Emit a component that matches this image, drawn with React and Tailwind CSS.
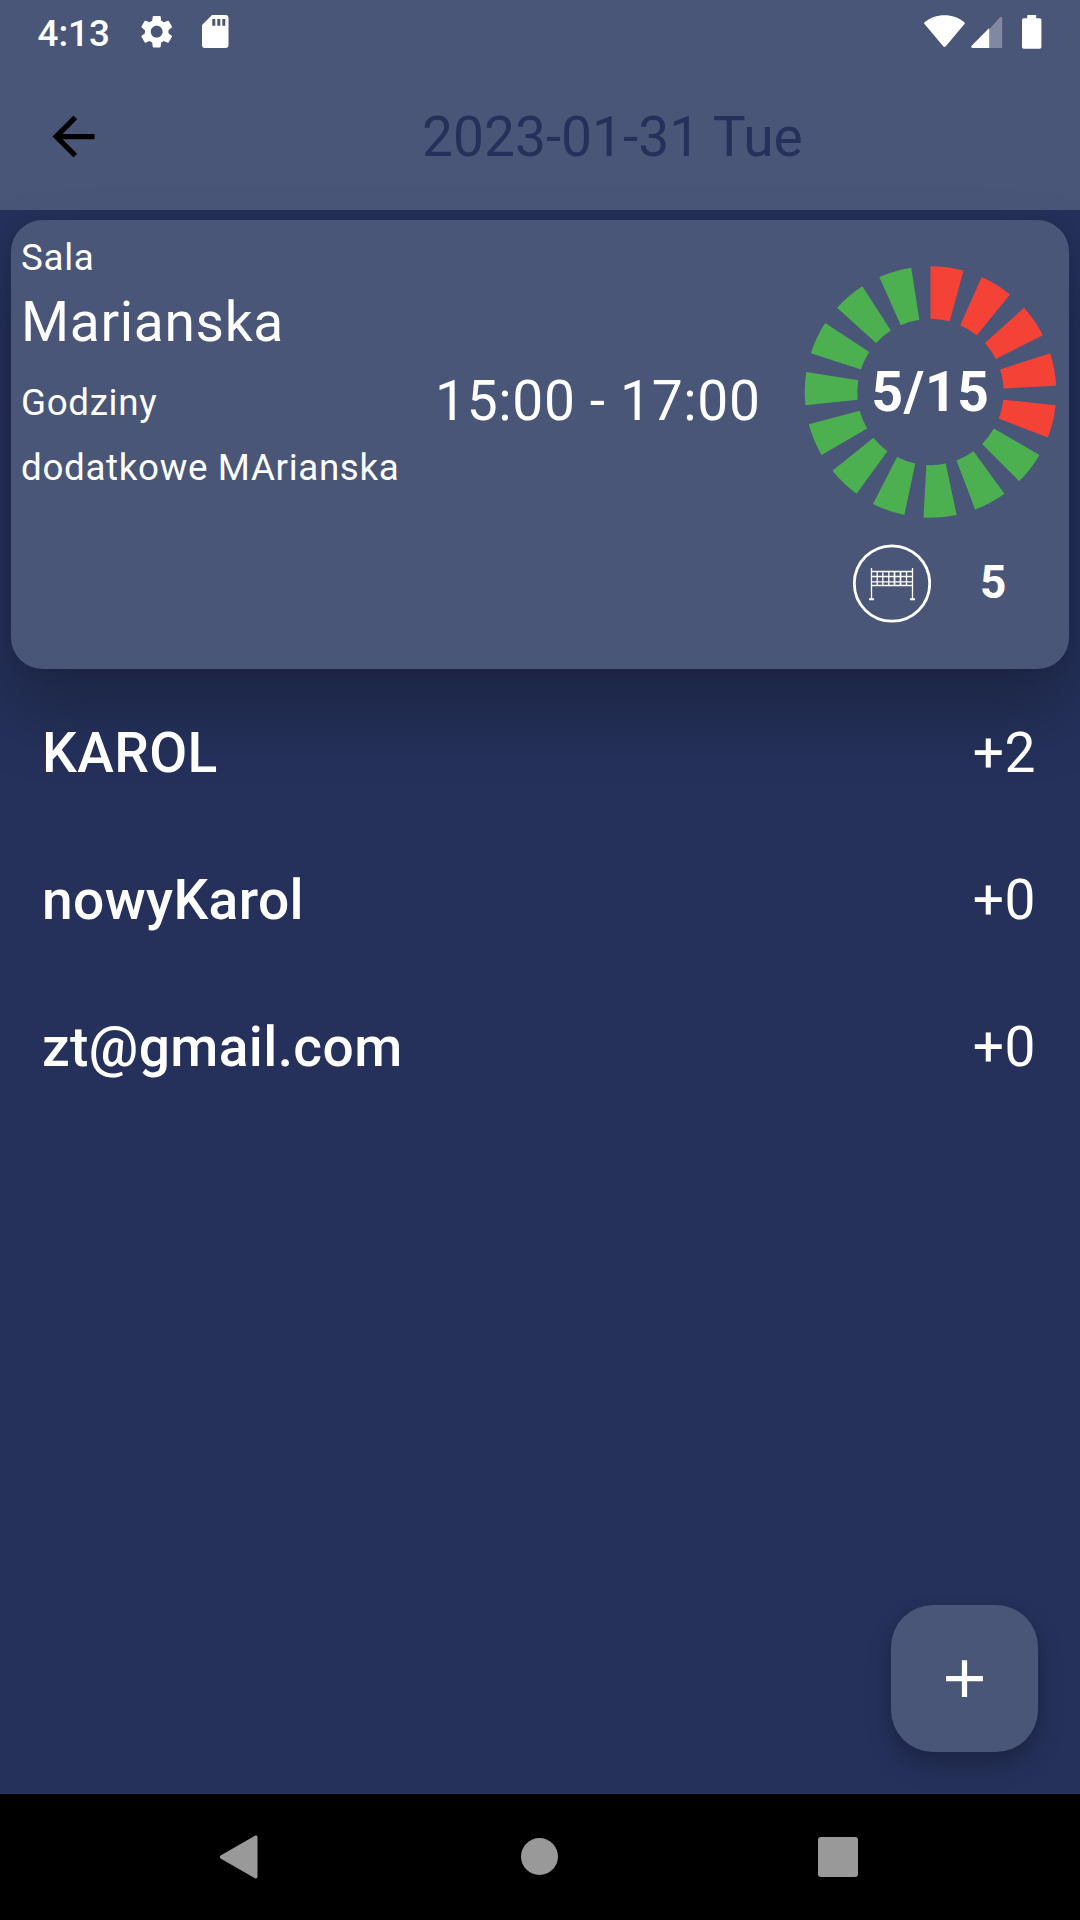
import { MdSettings, MdArrowBack, MdAdd } from 'react-icons/md'

const players = [
  { name: 'KAROL', extra: 2 },
  { name: 'nowyKarol', extra: 0 },
  { name: 'zt@gmail.com', extra: 0 },
]

const STEP = 24
const SWEEP = 15.2

function point(r, deg) {
  const a = (deg * Math.PI) / 180
  return `${(r * Math.sin(a)).toFixed(2)} ${(-r * Math.cos(a)).toFixed(2)}`
}

function segmentPath(start, outer = 125.8, inner = 73.2) {
  const end = start + SWEEP
  return `M${point(outer, start)}A${outer} ${outer} 0 0 1 ${point(outer, end)}L${point(inner, end)}A${inner} ${inner} 0 0 0 ${point(inner, start)}Z`
}

function StatusBar() {
  return (
    <div className="flex h-[63px] items-center justify-between pl-[37.5px] pr-[38px] text-white">
      <div className="flex items-center">
        <span className="w-[73px] pt-[3px] text-[36.75px] leading-[63px] font-medium">4:13</span>
        <MdSettings className="ml-[26.4px] size-[39.4px]" />
        <svg className="ml-[25.6px]" width="27" height="33" viewBox="0 0 27 33" fill="currentColor">
          <path fillRule="evenodd" d="M10 0H23.500a3 3 0 0 1 3 3V30a3 3 0 0 1-3 3H3a3 3 0 0 1-3-3V10ZM10.300 4V10.700H13.300V4ZM15.300 4V10.700H18.300V4ZM20.300 4V10.700H23.300V4Z" />
        </svg>
      </div>
      <div className="flex items-center">
        <svg width="41" height="34" viewBox="0 0 41 34" fill="currentColor">
          <path d="M.6 7.200C6 2.600 13 .2 20.500 .2S35 2.600 40.400 7.200c.6.500.6 1.200.1 1.800L21.800 31.200c-.8.900-1.800.900-2.600 0L.5 9c-.5-.6-.5-1.300.1-1.800Z" />
        </svg>
        <svg className="ml-[6px]" width="32" height="34" viewBox="0 0 32 34" fill="currentColor">
          <path d="M31.200 3.500V33H18V14.500L28.800 2.600c.9-.9 2.400-.5 2.400.9Z" opacity=".3" />
          <path d="M18.200 13V33H1.500C.3 33-.3 31.800.6 30.800Z" />
        </svg>
        <svg className="ml-[19px]" width="20" height="34" viewBox="0 0 20 34" fill="currentColor">
          <path d="M5.200 0h9v3.300h3.500a1.700 1.700 0 0 1 1.700 1.700V32a1.700 1.700 0 0 1-1.700 1.700H1.700A1.700 1.700 0 0 1 0 32V5a1.700 1.700 0 0 1 1.700-1.700h3.500Z" />
        </svg>
      </div>
    </div>
  )
}

function CapacityRing({ taken, total }) {
  return (
    <div className="relative size-[252px]">
      <svg className="overflow-visible" width="252" height="252" viewBox="-126.500 -126 252 252">
        {Array.from({ length: total }, (_, i) => (
          <path key={i} d={segmentPath(i * STEP)} fill={i < taken ? '#f44336' : '#4caf50'} />
        ))}
      </svg>
      <span className="absolute inset-0 flex items-center justify-center pt-[2px] pl-[1px] text-[55.125px] leading-none font-bold tracking-[0.66px]">
        {taken}/{total}
      </span>
    </div>
  )
}

function NetIcon() {
  return (
    <svg width="79" height="79" viewBox="0 0 79 79" fill="none" stroke="white">
      <circle cx="40" cy="39.500" r="37.700" strokeWidth="2.800" />
      <path d="M19.500 24V55M60.500 24V55" strokeWidth="1.300" />
      <path d="M17 55.200H22M58 55.200H63" strokeWidth="2" />
      <path d="M19.500 27.500H60.500M19.500 32.500H60.500M19.500 37.800H60.500M19.500 41.500H60.500" strokeWidth="1.300" />
      <path d="M25.200 27.500V41.500M30.800 27.500V41.500M36.800 27.500V41.500M54.500 27.500V41.500" strokeWidth="1.300" />
      <path d="M42.500 27.500V41.500M48.500 27.500V41.500" strokeWidth="1.700" />
    </svg>
  )
}

function EventCard() {
  return (
    <section className="mx-[11px] mt-[10px] flex h-[449px] justify-between rounded-[31.5px] bg-[#4a5678] pl-[10px] pt-[11px] text-[36.75px] tracking-[0.66px] text-white shadow-[0_42px_70px_rgba(0,0,0,0.26),0_0_16px_rgba(0,0,0,0.1)]">
      <div className="w-[750px]">
        <p className="leading-[53px]">Sala</p>
        <p className="text-[55.125px] leading-[77px]">Marianska</p>
        <div className="flex h-[80px] justify-between leading-[80px]">
          <span className="pt-[2px]">Godziny</span>
          <span className="w-[336px] text-[55.125px]">15:00 - 17:00</span>
        </div>
        <p className="pt-[1px] leading-[51px]">dodatkowe MArianska</p>
      </div>
      <div className="flex w-[265px] flex-col pt-[35px]">
        <CapacityRing taken={5} total={15} />
        <div className="mt-[26px] flex items-center pl-[48px]">
          <NetIcon />
          <span className="ml-[49px] pb-[2px] text-[45.9px] leading-[77px] font-bold">5</span>
        </div>
      </div>
    </section>
  )
}

export default function App() {
  return (
    <div className="flex h-[1920px] w-[1080px] flex-col overflow-hidden bg-[#25315b] font-['Roboto',sans-serif]">
      <header className="bg-[#4a5678]">
        <StatusBar />
        <div className="flex h-[147px] items-center">
          <MdArrowBack className="ml-[42px] size-[63px]" />
          <h1 className="ml-[317px] pt-[1px] text-[55.125px] leading-[147px] text-[#25315b]">2023-01-31 Tue</h1>
        </div>
      </header>

      <main className="flex flex-1 flex-col">
        <EventCard />
        <ul className="mt-[10.5px] flex-1 text-[55.125px] leading-[147px] tracking-[0.39px] text-white">
          {players.map(player => (
            <li key={player.name} className="flex h-[147px] justify-between pl-[42px] pr-[44.2px]">
              <span className="font-medium">{player.name}</span>
              <span>+{player.extra}</span>
            </li>
          ))}
        </ul>
        <button
          type="button"
          className="mr-[42px] mb-[42px] flex size-[147px] items-center justify-center self-end rounded-[42px] bg-[#4a5678] text-white shadow-[0_14px_26px_rgba(0,0,0,0.22),0_2px_12px_rgba(0,0,0,0.08)]"
        >
          <MdAdd className="size-[63px]" />
        </button>
      </main>

      {/* Android navigation bar */}
      <nav className="flex h-[126px] items-center bg-black pl-[219px] text-[#999]">
        <svg width="39" height="44" viewBox="-0.500 0 39 44" fill="currentColor">
          <path d="M35 .9 1.500 20.300c-1.600 1-1.600 2.400 0 3.400L35 43.100c1.500.8 3 .2 3-1.500V2.400C38 .7 36.500.1 35 .9Z" />
        </svg>
        <span className="mb-[1px] ml-[263px] size-[37px] rounded-full bg-[#999]" />
        <span className="ml-[260px] size-[40px] rounded-[3px] bg-[#999]" />
      </nav>
    </div>
  )
}
